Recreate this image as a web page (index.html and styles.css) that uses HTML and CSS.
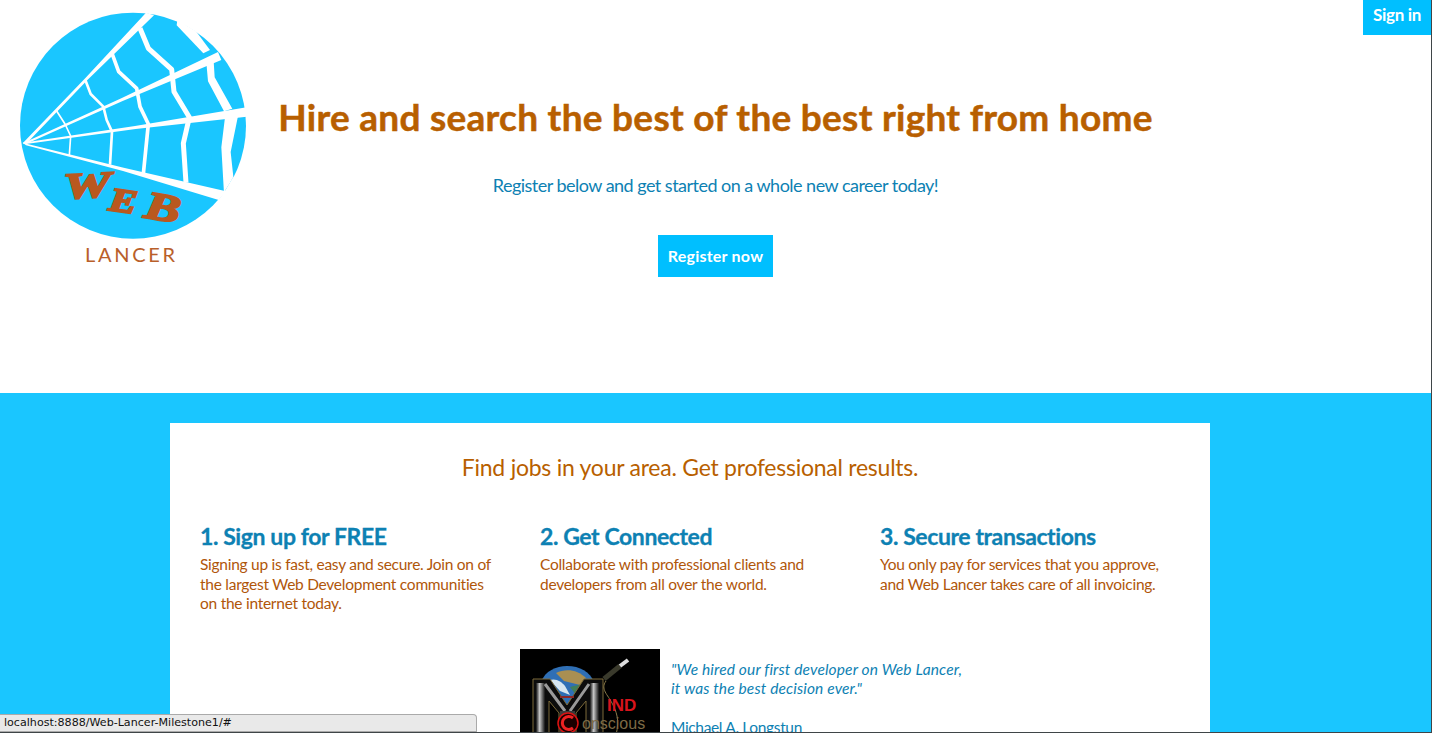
FILE: index.html
```html
<!DOCTYPE html>
<html lang="en">
<head>
<meta charset="utf-8">
<title>Web Lancer</title>
<link rel="stylesheet" href="styles.css">
</head>
<body>
<div class="page">
  <header class="hero">
    <a class="logo" href="#" aria-label="Web Lancer">
      <svg class="logo-svg" viewBox="0 0 810 840" width="270" height="280">
        <circle cx="399" cy="377" r="339" fill="#1ac6ff"/>
        <g fill="#fff">
          <polygon points="68,430 257,233 438,38 462,46 263,239 78,432"/>
          <polygon points="68,430 364,295 654,156 664,180 368,303 78,432"/>
          <polygon points="68,428 405,378 740,322 740,350 407,387 78,432"/>
          <polygon points="68,428 371,503 678,574 656,600 369,513 78,436"/>
          <polygon points="532,60 588,94 630,150 610,160 530,76"/>
          <polygon points="618,176 640,168 644,232 697,326 672,334 624,244"/>
          <polygon points="675,352 714,348 692,456 700,530 690,548 660,596 672,580 664,442"/>
          <polygon points="672,578 700,530 740,600 660,620"/>
        </g>
        <g fill="none" stroke="#fff" stroke-linejoin="round">
          <polyline stroke-width="5" points="168,330 195,372 212,408 208,466"/>
          <polyline stroke-width="8" points="256,240 272,282 310,320 320,360 336,395 330,494"/>
          <polyline stroke-width="11" points="336,160 356,215 410,265 420,320 445,372 430,522"/>
          <polyline stroke-width="15" points="420,85 445,145 515,208 522,275 568,352 550,430 558,548"/>
        </g>
        <g class="logo-web" fill="#b9581f" stroke="#b9581f">
          <text font-size="115" transform="translate(192 596) rotate(-3) scale(1.4 .95)">W</text>
          <text font-size="100" transform="translate(324 630) rotate(8) scale(1.25 1)">E</text>
          <text font-size="118" transform="translate(430 652) rotate(10) scale(1.35 1)">B</text>
        </g>
        <text class="logo-lancer" x="394" y="786" text-anchor="middle">LANCER</text>
      </svg>
    </a>
    <div class="hero-main">
      <h1 class="hero-title">Hire and search the best of the best right from home</h1>
      <p class="hero-sub">Register below and get started on a whole new career today!</p>
      <a class="btn btn-register" href="#">Register now</a>
    </div>
    <a class="btn btn-signin" href="#">Sign in</a>
  </header>

  <main class="band">
    <section class="card">
      <h2 class="card-title">Find jobs in your area. Get professional results.</h2>
      <div class="steps">
        <article class="step">
          <h3 class="step-title">1. Sign up for FREE</h3>
          <p class="step-text">Signing up is fast, easy and secure. Join on of<br>the largest Web Development communities<br>on the internet today.</p>
        </article>
        <article class="step">
          <h3 class="step-title">2. Get Connected</h3>
          <p class="step-text">Collaborate with professional clients and<br>developers from all over the world.</p>
        </article>
        <article class="step">
          <h3 class="step-title">3. Secure transactions</h3>
          <p class="step-text">You only pay for services that you approve,<br>and Web Lancer takes care of all invoicing.</p>
        </article>
      </div>
      <div class="testimonial">
        <svg class="client-logo" viewBox="0 0 140 110" width="140" height="110">
          <defs>
            <linearGradient id="stem" x1="0" x2="1" y1="0" y2="0">
              <stop offset="0" stop-color="#111"/>
              <stop offset=".4" stop-color="#c8c8c8"/>
              <stop offset="1" stop-color="#111"/>
            </linearGradient>
          </defs>
          <rect width="140" height="110" fill="#000"/>
          <path d="M21 33 C25 22 36 17 47 17 C60 17 70 23 74 33 L56 58 H40 Z" fill="#2f6fb5"/>
          <path d="M36 24 C46 19 58 21 66 29 L60 36 L44 32 Z" fill="#a98f52"/>
          <path d="M30 31 C36 29 42 33 45 37 L50 46 L40 42 Z" fill="#d7e6f0"/>
          <path d="M50 38 L62 35 L56 46 Z" fill="#3f7f5a"/>
          <path d="M13 30 H30 L47 56 L64 30 H83 V86 H66 V52 L56 64 V86 H39 V64 L29 52 V86 H13 Z" fill="#0c0c0c" stroke="#7c6a3a" stroke-width="1"/>
          <rect x="16" y="34" width="9" height="50" fill="url(#stem)"/>
          <rect x="70" y="34" width="9" height="50" fill="url(#stem)"/>
          <path d="M25 35 L45 62 M69 35 L50 62" stroke="#9a9a9a" stroke-width="3" fill="none"/>
          <rect x="40" y="47" width="14" height="2" fill="#8a2a2a"/>
          <path d="M40 62 H55 V86 H40 Z" fill="#3a3a3a"/>
          <path d="M84 30 L100 17" stroke="#3a3a2c" stroke-width="5"/>
          <path d="M100 17 L108 11" stroke="#ddd" stroke-width="4"/>
          <path d="M86 32 C80 40 88 46 92 54 C96 62 100 70 96 86" stroke="#8a7a4a" stroke-width="1" fill="none"/>
          <circle cx="48" cy="74" r="10" fill="#1a0000" stroke="#d11" stroke-width="1.5"/>
          <path d="M53 69 A6.5 6.5 0 1 0 53 79" stroke="#e22" stroke-width="3" fill="none"/>
          <text class="client-ind" x="87" y="62">IND</text>
          <text class="client-con" x="62" y="80">onscious</text>
        </svg>
        <div class="quote">
          <p class="quote-text">"We hired our first developer on Web Lancer,<br>it was the best decision ever."</p>
          <p class="quote-author">Michael A. Longstun</p>
        </div>
      </div>
    </section>
  </main>

  <div class="status">localhost:8888/Web-Lancer-Milestone1/#</div>
</div>
</body>
</html>
```
FILE: styles.css
```css
* { box-sizing: border-box; }
html, body { margin: 0; padding: 0; height: 733px; overflow: hidden; background: #fff; }
body { font-family: Lato, "Open Sans", sans-serif; }
.page {
  position: relative;
  height: 733px;
  overflow: hidden;
  border-right: 1px solid #3f4548;
  border-bottom: 1px solid #3f4548;
}
a { text-decoration: none; }

.hero {
  display: grid;
  grid-template-columns: 1fr auto 1fr;
  height: 393px;
}
.logo { display: block; width: 270px; height: 280px; }
.logo-svg { display: block; }
.logo-web text { font-family: "Liberation Serif", serif; font-weight: 700; font-style: italic; stroke-width: 6px; }
.logo-lancer { font-family: Lato, sans-serif; font-size: 60px; letter-spacing: 8px; fill: #b9602a; }

.hero-main { display: flex; flex-direction: column; align-items: center; padding-top: 94px; }
.hero-title {
  margin: 0;
  font-size: 37px;
  line-height: 46px;
  font-weight: 700;
  color: #b85f00;
  white-space: nowrap;
  letter-spacing: 0.27px;
  -webkit-text-stroke: 0.5px #b85f00;
}
.hero-sub { margin: 33px 0 0; font-size: 18px; line-height: 24px; color: #0d81b3; letter-spacing: -0.52px; }
.btn { display: block; background: #00bfff; color: #fff; font-weight: 700; text-align: center; }
.btn-register { margin-top: 38px; width: 115px; height: 42px; font-size: 16px; line-height: 42px; letter-spacing: 0.23px; }
.btn-signin { justify-self: end; width: 68px; height: 35px; font-size: 17px; line-height: 30px; letter-spacing: -0.35px; }

.band { background: #1ac6ff; height: 340px; padding: 30px 0 0 170px; }
.card { width: 1040px; height: 310px; background: #fff; padding: 29px 30px 30px; overflow: hidden; }
.card-title { margin: 0; text-align: center; font-size: 23px; line-height: 30px; font-weight: 400; color: #b85f00; letter-spacing: -0.25px; }
.steps { display: grid; grid-template-columns: repeat(3, 340px); margin-top: 40px; height: 127px; }
.step-title { margin: 0; font-size: 23px; line-height: 29px; font-weight: 700; color: #0d81b3; letter-spacing: -0.4px; -webkit-text-stroke: 0.3px #0d81b3; }
.step-text { margin: 4px 0 0; font-size: 15.5px; line-height: 19.5px; color: #b0560a; letter-spacing: -0.26px; white-space: nowrap; }

.testimonial { display: flex; gap: 11px; margin: 0 0 0 320px; }
.client-logo { display: block; flex: none; }
.client-ind { font-family: "Liberation Sans", sans-serif; font-size: 17px; font-weight: 700; fill: #d8141c; }
.client-con { font-family: "Liberation Sans", sans-serif; font-size: 16px; fill: #7d6a45; }
.quote { color: #0d81b3; font-size: 15.5px; line-height: 19px; padding-top: 11px; letter-spacing: -0.35px; }
.quote-text { margin: 0; font-style: italic; white-space: nowrap; letter-spacing: 0.14px; }
.quote-author { margin: 20px 0 0; }

.status {
  position: absolute;
  left: 0;
  bottom: 0;
  width: 477px;
  height: 18px;
  padding-left: 4px;
  background: #e9e9e9;
  border: 1px solid #aaa;
  border-left: 0;
  border-radius: 0 4px 0 0;
  font-family: "DejaVu Sans", sans-serif;
  font-size: 11.1px;
  line-height: 16px;
  color: #111;
}
```
